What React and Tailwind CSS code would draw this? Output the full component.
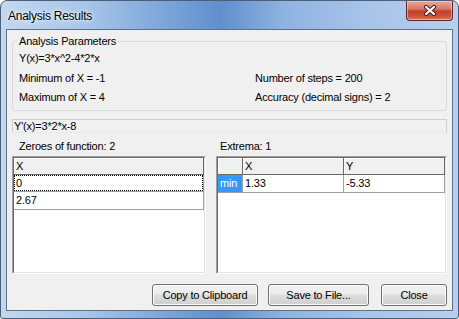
import React from 'react';

// Win7 style "Analysis Results" dialog

const btnCls =
  'h-[22px] rounded-[3px] border border-[#707070] bg-[linear-gradient(#f2f2f2_0%,#ebebeb_45%,#dddddd_50%,#cfcfcf_100%)] shadow-[inset_0_0_0_1px_#fbfbfb] text-[11px] tracking-[-0.2px] text-black';

const headCls =
  'h-[17px] flex items-center pl-[2px] bg-[#f0f0f0] border-r border-b border-[#696969] shadow-[inset_1px_1px_0_#ffffff]';

const cellCls = 'h-[18px] flex items-center pl-[2px] bg-white border-r border-b border-[#a0a0a0]';

const CloseGlyph = () => (
  <svg width="14" height="11" viewBox="0 0 14 11">
    <path d="M3 2 L11 9 M11 2 L3 9" stroke="#4a201a" strokeWidth="4.2" strokeLinecap="round" />
    <path d="M3 2 L11 9 M11 2 L3 9" stroke="#ffffff" strokeWidth="2.2" strokeLinecap="round" />
  </svg>
);

const Sunken = ({ className = '', children }) => (
  <div className={`border border-t-[#a0a0a0] border-l-[#a0a0a0] border-r-white border-b-white ${className}`}>
    <div className="h-full border border-t-[#696969] border-l-[#696969] border-r-[#e3e3e3] border-b-[#e3e3e3] bg-white">
      {children}
    </div>
  </div>
);

export default function App() {
  return (
    <div className="w-[459px] h-[319px] flex flex-col rounded-t-[7px] rounded-b-[3px] border border-[#4c5f7a] bg-[linear-gradient(90deg,#c3d7ef_0%,#a9c6ea_18%,#7ea7da_35%,#5f8fce_48%,#8fb3e1_62%,#a7c4e9_80%,#b6cfee_100%)] font-['Liberation_Sans',Arial,sans-serif] text-black overflow-hidden">
      {/* title bar */}
      <div className="h-[28px] flex justify-between">
        <div className="pl-[7px] pt-[6px] text-[12px] tracking-[-0.25px] [text-shadow:0_0_6px_#ffffff,0_0_3px_#ffffff]">
          Analysis Results
        </div>
        <div className="mr-[5px] w-[47px] h-[20px] rounded-b-[4px] border border-t-0 border-[#5a2a24] bg-[linear-gradient(#e8a99c_0%,#d77c6c_40%,#c4412d_55%,#c9533c_80%,#e07a5c_100%)] shadow-[inset_0_0_0_1px_rgba(255,220,210,0.5)] flex items-center justify-center">
          <CloseGlyph />
        </div>
      </div>

      {/* client area */}
      <div className="mx-[5px] h-[282px] border border-[#5f7089] bg-[#f0f0f0] px-[5px] flex flex-col text-[11px] tracking-[-0.2px]">
        <fieldset className="mt-[5px] rounded-[3px] border border-[#d9d9d9] px-[6px] pb-[3px]">
          <legend className="-ml-[2px] px-[2px] leading-[13px]">Analysis Parameters</legend>
          <div className="grid grid-cols-[236px_1fr]">
            <div className="h-[20px] flex items-center">Y(x)=3*x^2-4*2*x</div>
            <div />
            <div className="h-[20px] flex items-center">Minimum of X = -1</div>
            <div className="h-[20px] flex items-center">Number of steps = 200</div>
            <div className="h-[19px] flex items-center">Maximum of X = 4</div>
            <div className="h-[19px] flex items-center">Accuracy (decimal signs) = 2</div>
          </div>
        </fieldset>

        <div className="mt-[8px] h-[14px] flex items-center border border-[#cfcfcf] border-b-[#e8e8e8] pl-[1px]">
          Y'(x)=3*2*x-8
        </div>

        <div className="h-[23px] pt-[3px] flex items-center">
          <div className="w-[204px] pl-[7px]">Zeroes of function: 2</div>
          <div className="pl-[4px]">Extrema: 1</div>
        </div>

        <div className="flex gap-[10px]">
          <Sunken className="w-[194px] h-[118px]">
            <div className={headCls}>X</div>
            <div className="h-[17px] bg-white border-r border-b border-[#a0a0a0]">
              <div className="h-full flex items-center pl-[1px] border border-dotted border-black">0</div>
            </div>
            <div className={cellCls}>2.67</div>
          </Sunken>

          <Sunken className="w-[231px] h-[118px]">
            <div className="grid grid-cols-[25px_101px_1fr]">
              <div className={headCls} />
              <div className={headCls}>X</div>
              <div className={headCls}>Y</div>
              <div className="h-[18px] flex items-center pl-[2px] bg-[#3399ff] text-white border-r border-b border-[#a0a0a0]">min</div>
              <div className={cellCls}>1.33</div>
              <div className={cellCls}>-5.33</div>
            </div>
          </Sunken>
        </div>

        <div className="mt-[10px] flex justify-end">
          <button type="button" className={`${btnCls} w-[106px]`}>Copy to Clipboard</button>
          <button type="button" className={`${btnCls} w-[101px] ml-[10px]`}>Save to File...</button>
          <button type="button" className={`${btnCls} w-[66px] ml-[12px]`}>Close</button>
        </div>
      </div>
    </div>
  );
}
